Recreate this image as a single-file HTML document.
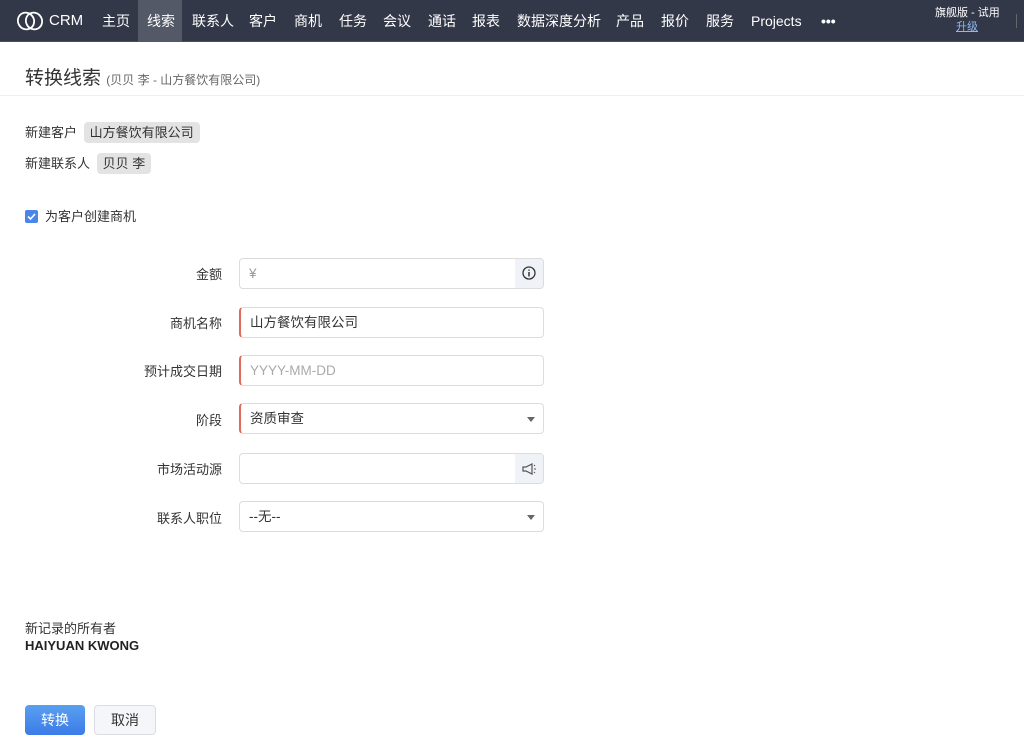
<!DOCTYPE html>
<html><head><meta charset="utf-8"><style>
*{box-sizing:border-box;margin:0;padding:0}
body{width:1024px;height:754px;overflow:hidden;background:#fff;font-family:"Liberation Sans","Noto Sans CJK SC",sans-serif;color:#333;font-size:13px;position:relative}
.nav{position:absolute;left:0;top:0;width:1024px;height:42px;background:#333849;border-bottom:1px solid #4a4f5e}
.nav span{position:absolute;top:0;line-height:42px;color:#fff;font-size:14px}
.act{position:absolute;left:138px;top:0;width:44px;height:42px;background:#545968}
.a{position:absolute}
.lbl{position:absolute;right:802px;font-size:13px;color:#333}
.inp{position:absolute;left:239px;width:305px;height:31px;border:1px solid #dcdcdc;border-radius:4px;font-size:13.5px;line-height:29px;padding-left:9px;color:#333}
.req{border-left:2px solid #e06b5c}
.addon{position:absolute;right:0;top:0;width:28px;height:29px;background:#eff2f7;border-radius:0 3px 3px 0}
.car{position:absolute;right:8px;top:13px;width:0;height:0;border-left:4px solid transparent;border-right:4px solid transparent;border-top:5px solid #666}
.tag{background:#e3e3e3;border-radius:4px;padding:3px 6px;}
</style></head><body>
<div class="nav">
<div class="act"></div>
<svg style="position:absolute;left:16px;top:10px" width="28" height="22" viewBox="0 0 28 22"><ellipse cx="10" cy="11" rx="8" ry="8.5" fill="none" stroke="#fff" stroke-width="1.8" transform="rotate(-30 10 11)"/><ellipse cx="18" cy="11" rx="8" ry="8.5" fill="none" stroke="#fff" stroke-width="1.8" transform="rotate(-30 18 11)"/></svg>
<span style="left:49px;font-size:15px">CRM</span>
<span style="left:102px">主页</span><span style="left:147px">线索</span><span style="left:192px">联系人</span><span style="left:249px">客户</span><span style="left:294px">商机</span><span style="left:339px">任务</span><span style="left:383px">会议</span><span style="left:428px">通话</span><span style="left:472px">报表</span><span style="left:517px">数据深度分析</span><span style="left:616px">产品</span><span style="left:661px">报价</span><span style="left:706px">服务</span><span style="left:751px">Projects</span><span style="left:821px;font-weight:bold">•••</span>
<span style="left:935px;top:6px;line-height:14px;font-size:11px">旗舰版 - 试用</span>
<span style="left:956px;top:20px;line-height:14px;font-size:11px;color:#8fb8f0;text-decoration:underline">升级</span>
<div style="position:absolute;left:1016px;top:14px;width:1px;height:14px;background:#666"></div>
</div>
<div class="a" style="left:25px;top:63px;font-size:19px;color:#333">转换线索 <span style="font-size:12px;color:#666">(贝贝 李 - 山方餐饮有限公司)</span></div>
<div class="a" style="left:0;top:95px;width:1024px;height:1px;background:#eee"></div>
<div class="a" style="left:25px;top:123px;line-height:20px">新建客户 <span class="tag" style="margin-left:3px">山方餐饮有限公司</span></div>
<div class="a" style="left:25px;top:154px;line-height:20px">新建联系人 <span class="tag" style="margin-left:3px">贝贝 李</span></div>
<div class="a" style="left:25px;top:210px;width:13px;height:13px;background:#4a86e8;border-radius:2px"><svg width="13" height="13"><path d="M3 6.5l2.5 2.5 4.5-5" stroke="#fff" stroke-width="1.6" fill="none"/></svg></div>
<div class="a" style="left:45px;top:209px;line-height:16px">为客户创建商机</div>

<div class="lbl" style="top:264px">金额</div>
<div class="inp" style="top:258px;color:#999">¥<div class="addon"><svg style="position:absolute;left:7px;top:7px" width="14" height="14"><circle cx="7" cy="7" r="6" fill="none" stroke="#333" stroke-width="1.3"/><path d="M7 6v4.5M7 3.5v1.3" stroke="#333" stroke-width="1.5"/></svg></div></div>
<div class="lbl" style="top:313px">商机名称</div>
<div class="inp req" style="top:307px">山方餐饮有限公司</div>
<div class="lbl" style="top:361px">预计成交日期</div>
<div class="inp req" style="top:355px;color:#aaa">YYYY-MM-DD</div>
<div class="lbl" style="top:410px">阶段</div>
<div class="inp req" style="top:403px">资质审查<div class="car"></div></div>
<div class="lbl" style="top:459px">市场活动源</div>
<div class="inp" style="top:453px"><div class="addon"><svg style="position:absolute;left:6px;top:8px" width="16" height="14"><path d="M2 5h3l6-3v10l-6-3H2z" fill="none" stroke="#555" stroke-width="1.2"/><path d="M13 4l1-1M13 7h2M13 10l1 1" stroke="#555"/></svg></div></div>
<div class="lbl" style="top:508px">联系人职位</div>
<div class="inp" style="top:501px">--无--<div class="car"></div></div>

<div class="a" style="left:25px;top:618px">新记录的所有者</div>
<div class="a" style="left:25px;top:638px;font-weight:bold;color:#222">HAIYUAN KWONG</div>
<div class="a" style="left:25px;top:705px;width:60px;height:30px;border-radius:4px;background:linear-gradient(#5aa0f0,#3b7be8);color:#fff;text-align:center;line-height:30px;font-size:14px">转换</div>
<div class="a" style="left:94px;top:705px;width:62px;height:30px;border-radius:4px;background:#f5f6f9;border:1px solid #dcdde2;color:#333;text-align:center;line-height:28px;font-size:14px">取消</div>
</body></html>
